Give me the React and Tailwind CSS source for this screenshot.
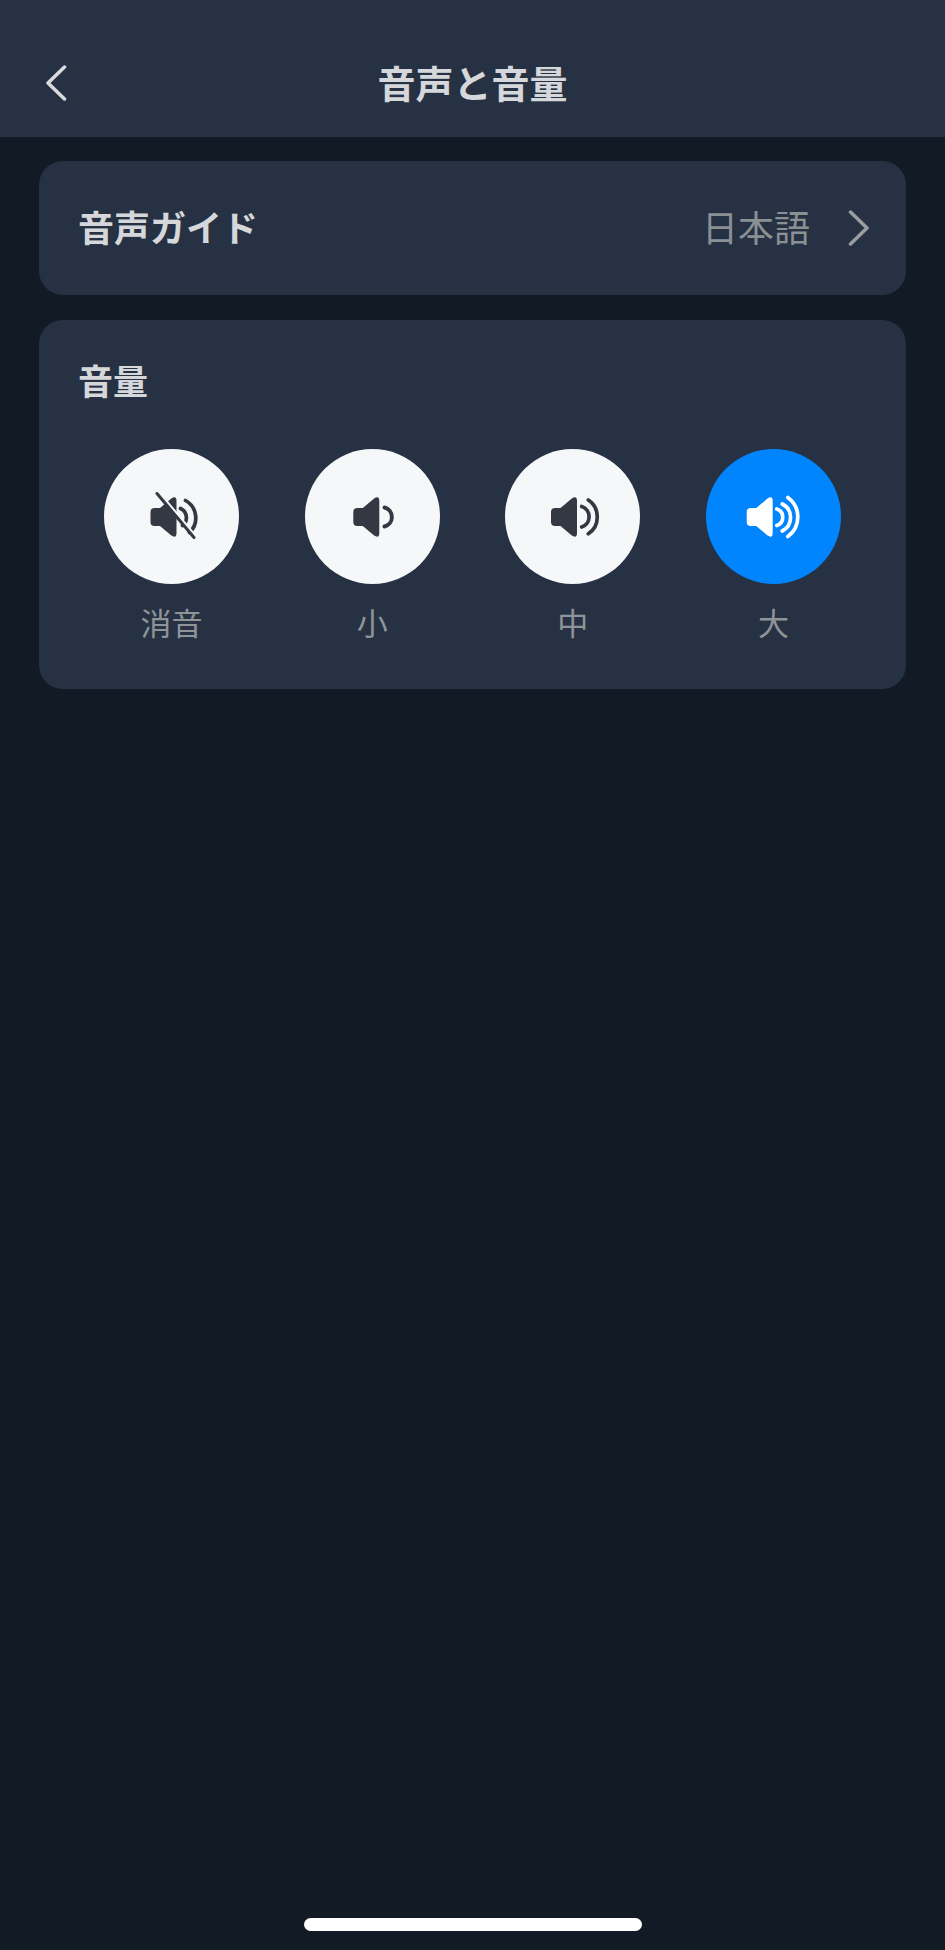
const fontStack = { fontFamily: '"Noto Sans CJK JP", "Noto Sans", sans-serif' };

const Speaker = ({ dx = 0 }) => (
	<path
		transform={`translate(${dx} 0)`}
		d="M12 21H17.5L28.5 11.8Q34 8 34 14V46Q34 52 28.5 48.2L17.5 39H12Q8 39 8 35V25Q8 21 12 21Z"
		fill="currentColor"
	/>
);

const Arc = ({ d, w = 3.7 }) => (
	<path d={d} fill="none" stroke="currentColor" strokeWidth={w} strokeLinecap="round" />
);

const IconMute = () => (
	<svg width="60" height="60" viewBox="0 0 60 60" className="text-[#343842]">
		<Speaker dx={0.5} />
		<Arc d="M38.5 21.5A10 10 0 0 1 40.5 38.5" />
		<Arc d="M43.5 13.5A20 20 0 0 1 47.5 45.5" />
		<line x1="16.5" y1="5.2" x2="53.5" y2="49.2" stroke="#f6f7f9" strokeWidth="3" />
		<line x1="15" y1="6.5" x2="52" y2="50.5" stroke="currentColor" strokeWidth="3" strokeLinecap="round" />
	</svg>
);

const IconLow = () => (
	<svg width="60" height="60" viewBox="0 0 60 60" className="text-[#343842]">
		<Speaker dx={3.3} />
		<Arc d="M42.5 20.5A9.8 9.8 0 0 1 42.5 39.5" w={3.9} />
	</svg>
);

const IconMid = () => (
	<svg width="60" height="60" viewBox="0 0 60 60" className="text-[#343842]">
		<Speaker />
		<Arc d="M38.7 19.5A10.8 10.8 0 0 1 38.7 40" />
		<Arc d="M45.3 13A20.4 20.4 0 0 1 45.3 46.8" />
	</svg>
);

const IconHigh = () => (
	<svg width="60" height="60" viewBox="0 0 60 60" className="text-white">
		<Speaker dx={-4.3} />
		<Arc d="M33.8 22A8.7 8.7 0 0 1 33.8 38.5" />
		<Arc d="M39.2 17A15.1 15.1 0 0 1 39.2 44" />
		<Arc d="M44.8 10.5A24 24 0 0 1 44.8 49.5" />
	</svg>
);

const levels = [
	{ label: '消音', icon: <IconMute /> },
	{ label: '小', icon: <IconLow /> },
	{ label: '中', icon: <IconMid /> },
	{ label: '大', icon: <IconHigh />, active: true },
];

const App = () => {
	return (
		<div className="w-[945px] h-[1950px] bg-[#111a25] flex flex-col" style={fontStack}>
			<header className="h-[137px] bg-[#263243] flex items-center justify-between pt-[29px] px-[45px]">
				<svg width="22" height="36" viewBox="0 0 22 36" fill="none" stroke="#d9dbde" strokeWidth="3.5" strokeLinecap="round" strokeLinejoin="round">
					<path d="M19.5 2L3 18L19.5 34" />
				</svg>
				<h1 className="text-[38px] leading-[50px] font-semibold text-[#d5d7da] pb-[2px]">音声と音量</h1>
				<div className="w-[22px]" />
			</header>

			<div className="mx-[39px] mt-[24px] h-[134px] rounded-[24px] bg-[#263243] flex items-center justify-between pl-[39px] pr-[36px]">
				<span className="text-[36px] leading-[44px] font-semibold text-[#d5d7da] pb-[5px]">音声ガイド</span>
				<div className="flex items-center gap-[38px]">
					<span className="text-[36px] leading-[44px] text-[#8b9095] pb-[5px]">日本語</span>
					<svg width="22" height="36" viewBox="0 0 22 36" fill="none" stroke="#9a9da1" strokeWidth="3.5" strokeLinecap="round" strokeLinejoin="round">
						<path d="M2.5 2L19 18L2.5 34" />
					</svg>
				</div>
			</div>

			<div className="mx-[39px] mt-[25px] h-[369px] rounded-[24px] bg-[#263243] pt-[38px] px-[39px]">
				<h2 className="text-[35px] leading-[44px] font-semibold text-[#d5d7da]">音量</h2>
				<div className="mt-[47px] px-[26px] flex justify-between">
					{levels.map((level) => (
						<div key={level.label} className="w-[135px] flex flex-col items-center">
							<div className={`w-[135px] h-[135px] rounded-full flex items-center justify-center ${level.active ? 'bg-[#0085ff]' : 'bg-[#f6f7f9]'}`}>
								{level.icon}
							</div>
							<span className="mt-[18px] text-[31px] leading-[40px] text-[#8f9499]">{level.label}</span>
						</div>
					))}
				</div>
			</div>

			<div className="mt-auto mb-[19px] mx-auto w-[338px] h-[13px] rounded-full bg-white" />
		</div>
	);
};

export default App;
